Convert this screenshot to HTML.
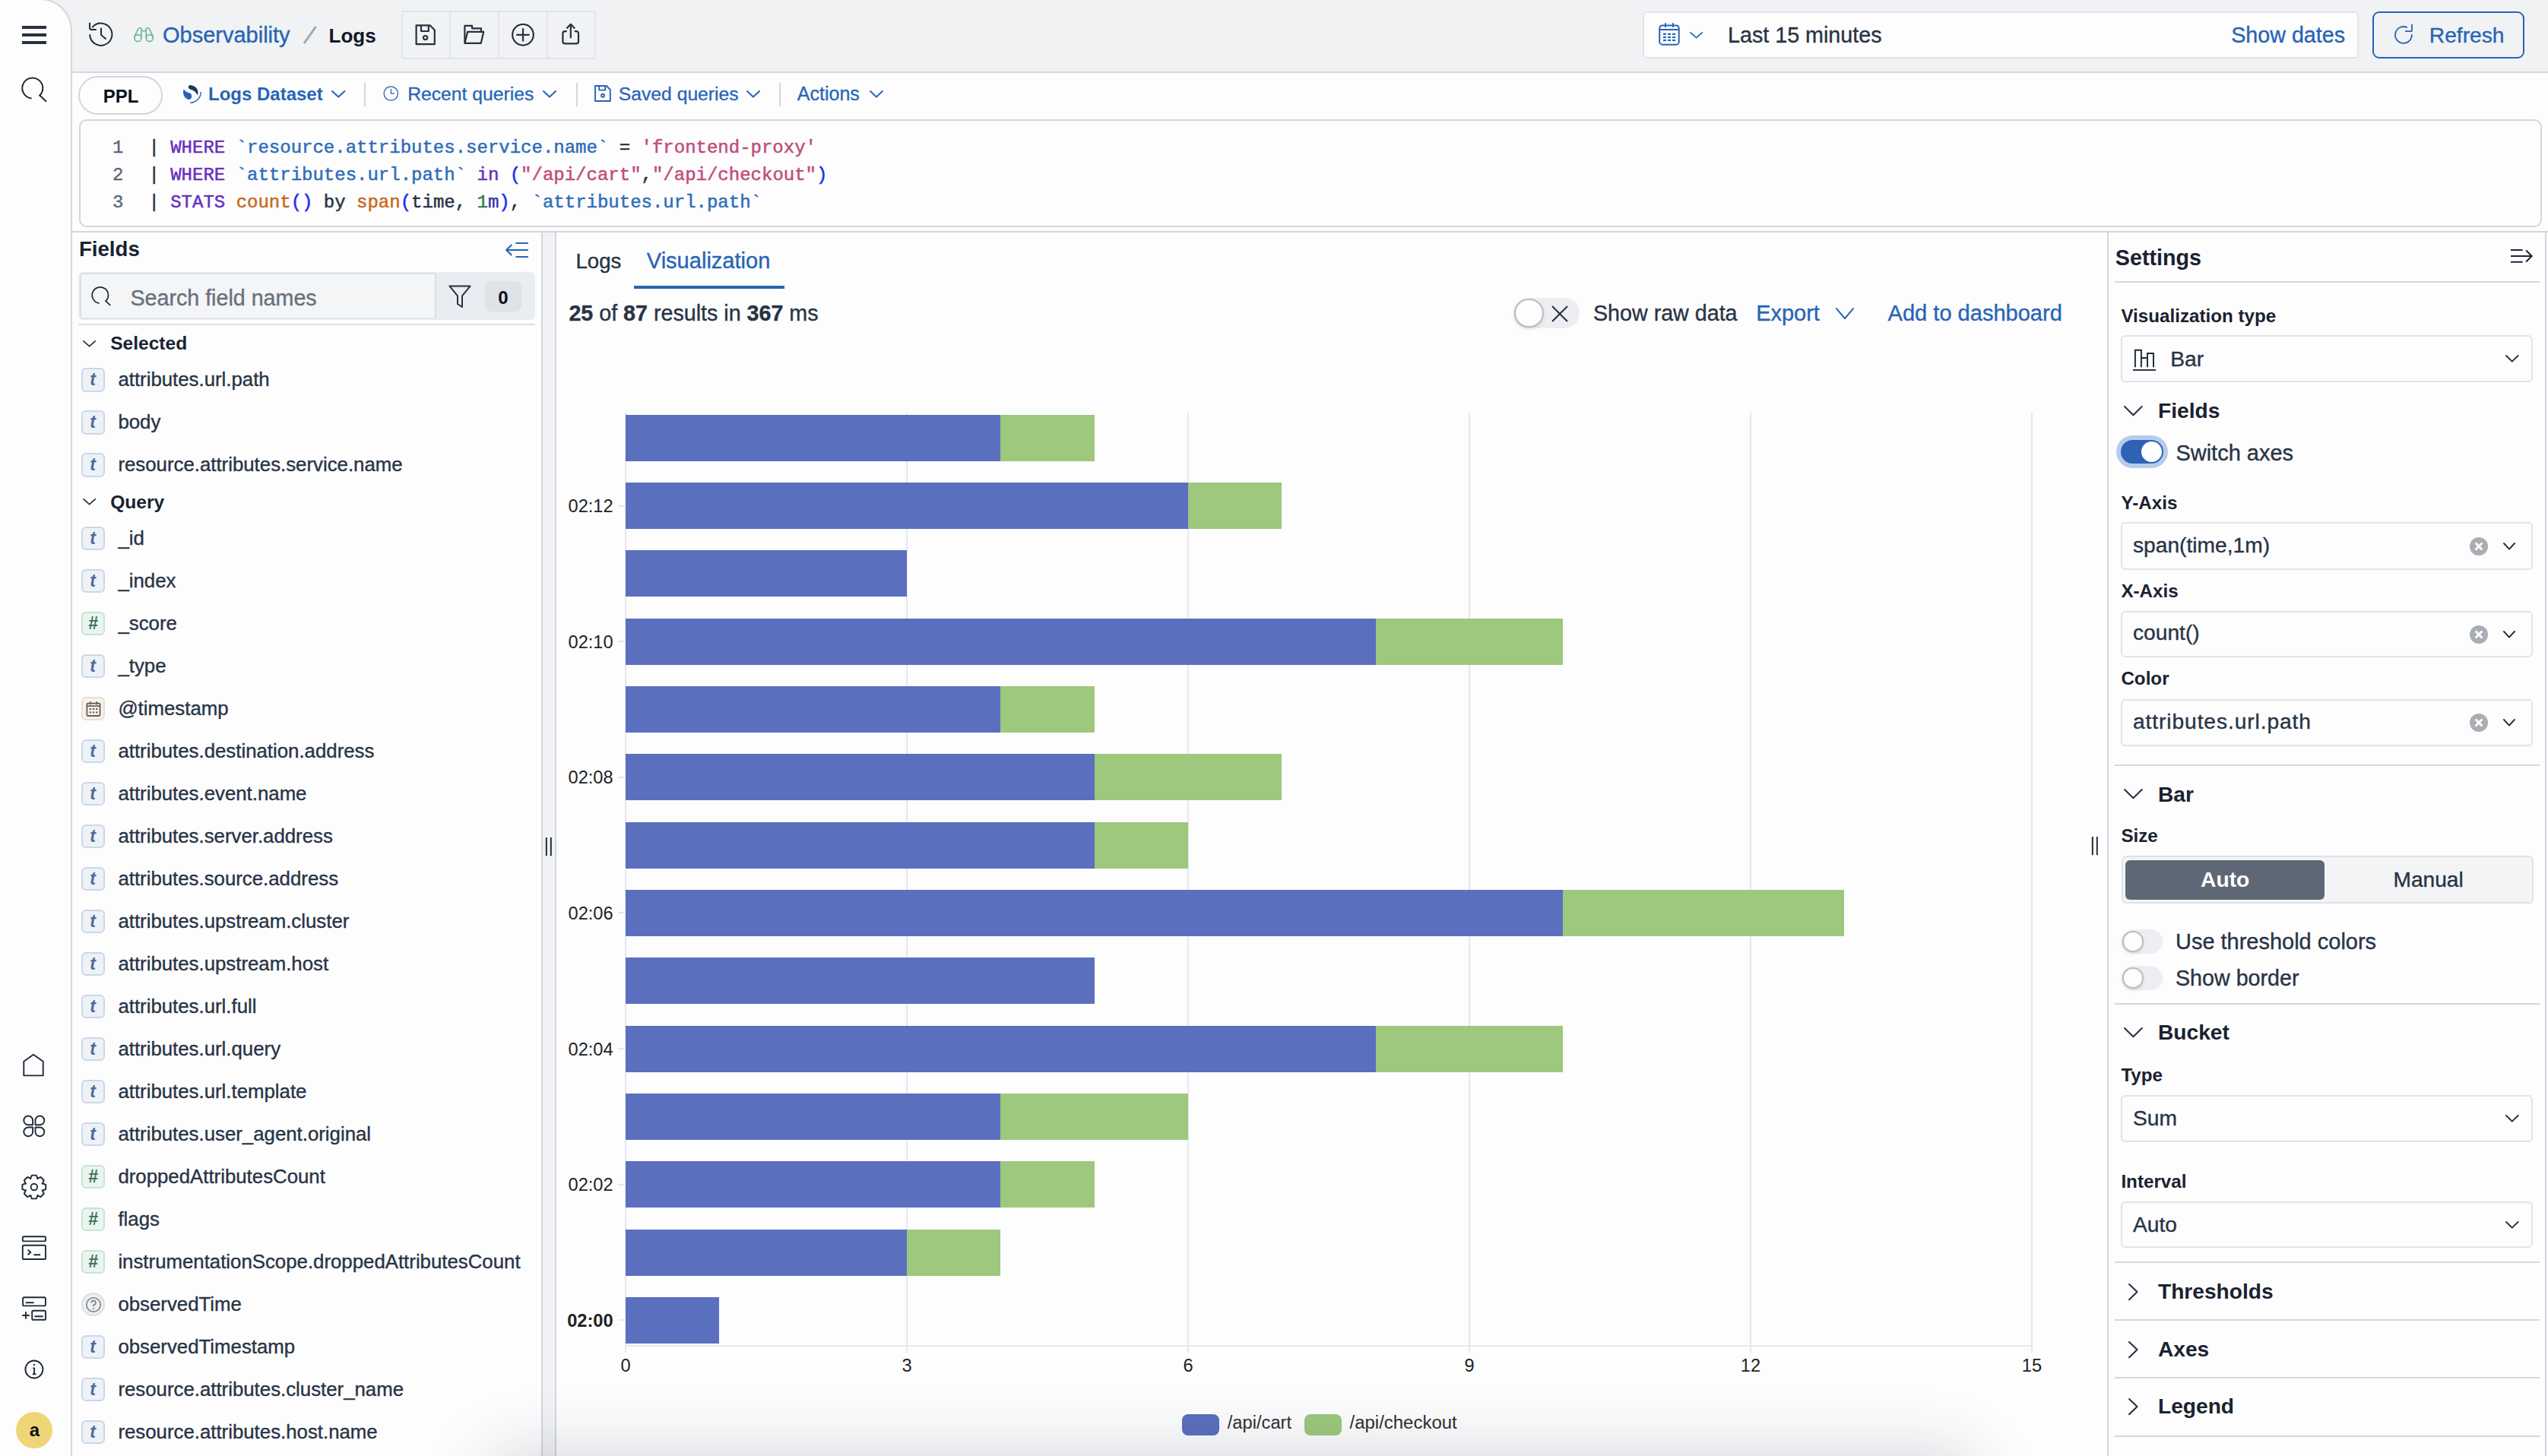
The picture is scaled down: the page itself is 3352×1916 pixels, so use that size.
<!DOCTYPE html><html><head><meta charset="utf-8"><title>Logs</title><style>
html,body{margin:0;padding:0;background:#fff;overflow:hidden}
#root{position:relative;width:1676px;height:958px;zoom:2;overflow:hidden;background:#fdfdfe;font-family:"Liberation Sans", sans-serif}
@media (max-width:2400px){#root{zoom:1}}
.b{position:absolute;box-sizing:border-box;display:block}
.t{position:absolute;white-space:nowrap;font-family:"Liberation Sans", sans-serif}
.t.m{font-family:"Liberation Mono", monospace}
</style></head><body><div id="root">
<div class="b" style="left:0.00px;top:0.00px;width:1676.00px;height:48.00px;background:#f1f2f4;border-bottom:1px solid #d3d6dc"></div>
<div class="b" style="left:0.00px;top:-1.00px;width:47.50px;height:960.00px;background:#fdfdfe;border-right:1px solid #d3d6dc;border-top:1px solid #d3d6dc;border-top-right-radius:21px"></div>
<div class="b" style="left:14.50px;top:17.00px;width:16.00px;height:1.85px;background:#28313f"></div>
<div class="b" style="left:14.50px;top:22.05px;width:16.00px;height:1.85px;background:#28313f"></div>
<div class="b" style="left:14.50px;top:27.10px;width:16.00px;height:1.85px;background:#28313f"></div>
<svg class="b" style="left:12.00px;top:48.00px;" width="22.00" height="22.00" viewBox="12.00 48.00 22.00 22.00" fill="none"><g stroke="#1f2a38" stroke-width="1.0" fill="none"><path d="M20.8 64.72 A6.75 6.75 0 1 1 25.74 63.17"/><path d="M25.9 62.5 L30.5 66.9"/></g></svg>
<svg class="b" style="left:54.00px;top:12.00px;" width="24.00" height="22.00" viewBox="54.00 12.00 24.00 22.00" fill="none"><g stroke="#1f2a38" stroke-width="1.0" fill="none" stroke-linecap="round"><path d="M60.9 17.8 A7.3 7.3 0 1 1 59.1 22.95"/><path d="M59.0 15.3 V18.3 Q59.0 19.5 60.2 19.5 H63.0"/><path d="M66.5 18.7 V22.95 L69.5 25.5"/></g></svg>
<svg class="b" style="left:86.00px;top:16.00px;" width="17.00" height="12.00" viewBox="86.00 16.00 17.00 12.00" fill="none"><g stroke="#6db59b" stroke-width="0.8" fill="none" stroke-linejoin="round"><circle cx="90.7" cy="25.05" r="2.25"/><circle cx="98.4" cy="25.05" r="2.25"/><path d="M88.25 24.4 L90.9 19.0 Q91.9 17.8 93.0 18.8 V25.3"/><path d="M100.85 24.4 L98.2 19.0 Q97.2 17.8 96.1 18.8 V25.3"/><path d="M93.0 20.3 H96.1"/></g></svg>
<div class="t" style="left:107.00px;top:16.04px;font-size:14.50px;line-height:14.50px;font-weight:400;color:#2864b4;-webkit-text-stroke:0.18px currentColor;">Observability</div>
<svg class="b" style="left:198.00px;top:16.00px;" width="12.00" height="14.00" viewBox="0 0 12 14" fill="none"><path d="M9.8 1.5 L2 12.6" stroke="#a3a8b1" stroke-width="1.5"/></svg>
<div class="t" style="left:216.30px;top:17.04px;font-size:13.00px;line-height:13.00px;font-weight:700;color:#111827;">Logs</div>
<div class="b" style="left:264.00px;top:7.00px;width:128.00px;height:32.00px;border:1px solid #e1e4e9;border-radius:1px"></div>
<div class="b" style="left:295.50px;top:7.00px;width:1.00px;height:32.00px;background:#e1e4e9"></div>
<div class="b" style="left:327.60px;top:7.00px;width:1.00px;height:32.00px;background:#e1e4e9"></div>
<div class="b" style="left:359.50px;top:7.00px;width:1.00px;height:32.00px;background:#e1e4e9"></div>
<svg class="b" style="left:272.50px;top:15.50px;" width="15.00" height="15.00" viewBox="0 0 15 15" fill="none"><g stroke="#28313f" stroke-width="1.1" fill="none" stroke-linejoin="round"><path d="M1.3 1.2 H10.4 L13.4 4.3 V13.6 H1.3 Z"/><path d="M4.5 1.2 V5 H9.4 V1.2"/><circle cx="7.3" cy="9.3" r="1.3"/></g></svg>
<svg class="b" style="left:304.50px;top:15.50px;" width="15.00" height="15.00" viewBox="0 0 15 15" fill="none"><g stroke="#28313f" stroke-width="1.1" fill="none" stroke-linejoin="round"><path d="M1.2 12.9 V1.4 H6 V3.2 H12 V5.1"/><path d="M1.2 12.9 L3.1 5.4 H13.6 L11.9 12.9 Z"/></g></svg>
<svg class="b" style="left:336.50px;top:15.50px;" width="15.00" height="15.00" viewBox="0 0 15 15" fill="none"><g stroke="#28313f" stroke-width="1.1" fill="none"><circle cx="7.5" cy="7.4" r="6.9"/><path d="M7.5 3.1 V11.8 M3.1 7.4 H11.8"/></g></svg>
<svg class="b" style="left:368.50px;top:14.50px;" width="15.00" height="16.00" viewBox="0 0 15 16" fill="none"><g stroke="#28313f" stroke-width="1.1" fill="none" stroke-linejoin="round"><path d="M4.4 6.1 H3.2 Q1.7 6.1 1.7 7.6 V12.8 Q1.7 14.2 3.2 14.2 H10.6 Q12 14.2 12 12.8 V7.6 Q12 6.1 10.6 6.1 H9.4"/><path d="M6.9 10.6 V1.4 M4.2 4.2 L6.9 1.4 L9.6 4.2"/></g></svg>
<div class="b" style="left:1080.50px;top:7.50px;width:471.00px;height:31.00px;background:#fdfdfe;border:1px solid #e2e4eb;border-radius:3px"></div>
<svg class="b" style="left:1088.00px;top:13.00px;" width="20.00" height="20.00" viewBox="1088.00 13.00 20.00 20.00" fill="none"><g stroke="#2864b4" stroke-width="1" fill="none"><rect x="1091.6" y="16.7" width="12.75" height="12.65" rx="1.9"/><path d="M1095.5 15.1 V18.0 M1100.5 15.1 V18.0 M1091.6 19.55 H1104.35"/></g><g fill="#2864b4"><rect x="1094.0" y="21.9" width="2" height="1.1"/><rect x="1097.0" y="21.9" width="2" height="1.1"/><rect x="1100.0" y="21.9" width="2" height="1.1"/><rect x="1094.0" y="23.95" width="2" height="1.1"/><rect x="1097.0" y="23.95" width="2" height="1.1"/><rect x="1100.0" y="23.95" width="2" height="1.1"/><rect x="1094.0" y="25.95" width="2" height="1.1"/><rect x="1097.0" y="25.95" width="2" height="1.1"/><rect x="1100.0" y="25.95" width="2" height="1.1"/></g></svg>
<svg class="b" style="left:1109.65px;top:18.75px;" width="12.60" height="8.25" viewBox="1109.65 18.75 12.60 8.25" fill="none"><path d="M1112.10 21.20 L1115.95 24.55 L1119.80 21.20" stroke="#2864b4" stroke-width="0.9" stroke-linecap="round" stroke-linejoin="round"/></svg>
<div class="t" style="left:1136.50px;top:16.24px;font-size:14.35px;line-height:14.35px;font-weight:400;color:#283444;-webkit-text-stroke:0.18px currentColor;">Last 15 minutes</div>
<div class="t" style="left:1467.60px;top:16.24px;font-size:14.35px;line-height:14.35px;font-weight:400;color:#2864b4;-webkit-text-stroke:0.18px currentColor;">Show dates</div>
<div class="b" style="left:1560.30px;top:7.35px;width:100.30px;height:31.10px;border:1px solid #2864b4;border-radius:4.5px"></div>
<svg class="b" style="left:1572.00px;top:13.00px;" width="18.00" height="18.00" viewBox="1572.00 13.00 18.00 18.00" fill="none"><g stroke="#2864b4" stroke-width="0.9" fill="none"><path d="M1583.4 18.1 A5.45 5.45 0 1 0 1586.4 22.6"/><path d="M1586.5 15.9 V19.7 Q1586.5 20.55 1585.65 20.55 H1582.0"/></g></svg>
<div class="t" style="left:1597.90px;top:16.24px;font-size:14.10px;line-height:14.10px;font-weight:400;color:#2864b4;-webkit-text-stroke:0.18px currentColor;">Refresh</div>
<div class="b" style="left:51.70px;top:50.10px;width:55.50px;height:25.50px;border:1px solid #d3d6dc;border-radius:13px;background:#fdfdfe"></div>
<div class="t" style="left:67.90px;top:57.34px;font-size:12.00px;line-height:12.00px;font-weight:700;color:#0b0f17;">PPL</div>
<svg class="b" style="left:119.00px;top:54.00px;" width="15.00" height="15.00" viewBox="119.00 54.00 15.00 15.00" fill="none"><path d="M124.0 57.6 C123.6 56.4 124.8 55.9 125.9 56.1 C128.6 56.6 130.5 58.8 130.2 61.2 C130.1 62.0 129.9 62.5 129.8 62.7 C129.0 60.6 127.6 59.6 125.8 59.0 C124.8 58.7 124.2 58.3 124.0 57.6 Z" fill="#163b5f"/><path d="M121.0 58.8 C121.6 60.0 122.6 60.5 124.2 61.0 C125.6 61.5 126.3 62.3 126.1 63.6 C125.9 65.1 124.7 65.8 123.6 65.4 C121.5 64.6 120.4 62.3 120.5 60.5 C120.5 59.8 120.7 59.2 121.0 58.8 Z" fill="#2860b7"/><path d="M132.15 60.5 A7.1 7.1 0 0 1 125.05 67.55" stroke="#2860b7" stroke-width="0.7"/></svg>
<div class="t" style="left:137.00px;top:56.14px;font-size:12.00px;line-height:12.00px;font-weight:700;color:#2864b4;">Logs Dataset</div>
<svg class="b" style="left:215.80px;top:57.60px;" width="13.20" height="8.80" viewBox="215.80 57.60 13.20 8.80" fill="none"><path d="M218.30 60.10 L222.40 63.90 L226.50 60.10" stroke="#2864b4" stroke-width="1.0" stroke-linecap="round" stroke-linejoin="round"/></svg>
<div class="b" style="left:239.50px;top:54.30px;width:1.00px;height:15.50px;background:#d3d6dc"></div>
<svg class="b" style="left:250.00px;top:55.00px;" width="14.00" height="14.00" viewBox="250.00 55.00 14.00 14.00" fill="none"><circle cx="257.15" cy="61.5" r="4.6" stroke="#2864b4" stroke-width="0.65"/><path d="M257.2 58.5 V61.6 H259.5" stroke="#2864b4" stroke-width="0.65"/></svg>
<div class="t" style="left:268.10px;top:56.14px;font-size:12.35px;line-height:12.35px;font-weight:400;color:#2864b4;-webkit-text-stroke:0.15px #2864b4">Recent queries</div>
<svg class="b" style="left:355.00px;top:57.60px;" width="13.00" height="8.80" viewBox="355.00 57.60 13.00 8.80" fill="none"><path d="M357.50 60.10 L361.50 63.90 L365.50 60.10" stroke="#2864b4" stroke-width="1.0" stroke-linecap="round" stroke-linejoin="round"/></svg>
<div class="b" style="left:378.80px;top:54.30px;width:1.00px;height:15.50px;background:#d3d6dc"></div>
<svg class="b" style="left:390.50px;top:55.50px;" width="12.00" height="12.00" viewBox="0 0 12 12" fill="none"><g stroke="#2864b4" stroke-width="0.95" fill="none" stroke-linejoin="round"><path d="M1 1 H8.4 L10.9 3.5 V11 H1 Z"/><path d="M3.6 1 V3.8 H7.6 V1"/><circle cx="6" cy="7.4" r="1"/></g></svg>
<div class="t" style="left:406.90px;top:56.14px;font-size:12.35px;line-height:12.35px;font-weight:400;color:#2864b4;-webkit-text-stroke:0.15px #2864b4">Saved queries</div>
<svg class="b" style="left:489.00px;top:57.60px;" width="13.00" height="8.80" viewBox="489.00 57.60 13.00 8.80" fill="none"><path d="M491.50 60.10 L495.50 63.90 L499.50 60.10" stroke="#2864b4" stroke-width="1.0" stroke-linecap="round" stroke-linejoin="round"/></svg>
<div class="b" style="left:512.30px;top:54.30px;width:1.00px;height:15.50px;background:#d3d6dc"></div>
<div class="t" style="left:524.40px;top:55.64px;font-size:12.50px;line-height:12.50px;font-weight:400;color:#2864b4;-webkit-text-stroke:0.15px #2864b4">Actions</div>
<svg class="b" style="left:570.20px;top:57.60px;" width="12.90" height="8.80" viewBox="570.20 57.60 12.90 8.80" fill="none"><path d="M572.70 60.10 L576.65 63.90 L580.60 60.10" stroke="#2864b4" stroke-width="1.0" stroke-linecap="round" stroke-linejoin="round"/></svg>
<div class="b" style="left:52.00px;top:78.50px;width:1620.00px;height:71.00px;border:1px solid #d3d6dc;border-radius:5px;background:#fdfdfe"></div>
<div class="t m" style="right:1594.80px;top:91.59px;font-size:12.00px;line-height:12.00px;font-weight:400;color:#5b6678;-webkit-text-stroke:0.18px currentColor;">1</div>
<div class="t m" style="left:97.70px;top:91.59px;font-size:12.00px;line-height:12.00px;font-weight:400;color:#283444;-webkit-text-stroke:0.25px currentColor"><span style="color:#283444">|&nbsp;</span><span style="color:#6a2fbf">WHERE</span><span style="color:#283444">&nbsp;</span><span style="color:#2f6db8">`resource.attributes.service.name`</span><span style="color:#283444">&nbsp;=&nbsp;</span><span style="color:#c24b7c">'frontend-proxy'</span></div>
<div class="t m" style="right:1594.80px;top:109.54px;font-size:12.00px;line-height:12.00px;font-weight:400;color:#5b6678;-webkit-text-stroke:0.18px currentColor;">2</div>
<div class="t m" style="left:97.70px;top:109.54px;font-size:12.00px;line-height:12.00px;font-weight:400;color:#283444;-webkit-text-stroke:0.25px currentColor"><span style="color:#283444">|&nbsp;</span><span style="color:#6a2fbf">WHERE</span><span style="color:#283444">&nbsp;</span><span style="color:#2f6db8">`attributes.url.path`</span><span style="color:#283444">&nbsp;</span><span style="color:#6a2fbf">in</span><span style="color:#283444">&nbsp;</span><span style="color:#1a2cf0">(</span><span style="color:#c24b7c">"/api/cart"</span><span style="color:#283444">,</span><span style="color:#c24b7c">"/api/checkout"</span><span style="color:#1a2cf0">)</span></div>
<div class="t m" style="right:1594.80px;top:127.54px;font-size:12.00px;line-height:12.00px;font-weight:400;color:#5b6678;-webkit-text-stroke:0.18px currentColor;">3</div>
<div class="t m" style="left:97.70px;top:127.54px;font-size:12.00px;line-height:12.00px;font-weight:400;color:#283444;-webkit-text-stroke:0.25px currentColor"><span style="color:#283444">|&nbsp;</span><span style="color:#6a2fbf">STATS</span><span style="color:#283444">&nbsp;</span><span style="color:#c56a20">count</span><span style="color:#1a2cf0">()</span><span style="color:#283444">&nbsp;by&nbsp;</span><span style="color:#c56a20">span</span><span style="color:#1a2cf0">(</span><span style="color:#283444">time,&nbsp;</span><span style="color:#2f7d52">1</span><span style="color:#3b34a8">m</span><span style="color:#1a2cf0">)</span><span style="color:#283444">,&nbsp;</span><span style="color:#2f6db8">`attributes.url.path`</span></div>
<div class="b" style="left:47.00px;top:152.00px;width:1629.00px;height:1.00px;background:#d3d6dc"></div>
<div class="b" style="left:356.00px;top:152.50px;width:1.00px;height:806.00px;background:#d3d6dc"></div>
<div class="b" style="left:357.00px;top:153.00px;width:8.50px;height:805.00px;background:#f1f2f4"></div>
<div class="b" style="left:365.20px;top:152.50px;width:1.00px;height:806.00px;background:#d3d6dc"></div>
<div class="b" style="left:1386.00px;top:152.50px;width:1.00px;height:806.00px;background:#d3d6dc"></div>
<div class="b" style="left:1674.20px;top:152.50px;width:1.00px;height:806.00px;background:#d3d6dc"></div>
<svg class="b" style="left:358.00px;top:550.50px;" width="6.00" height="13.00" viewBox="0 0 6 13" fill="none"><path d="M1.4 0.5 V12.6 M4.4 0.5 V12.6" stroke="#182536" stroke-width="0.95"/></svg>
<svg class="b" style="left:1375.00px;top:550.00px;" width="6.00" height="13.00" viewBox="0 0 6 13" fill="none"><path d="M1.4 0.5 V12.6 M4.4 0.5 V12.6" stroke="#182536" stroke-width="0.95"/></svg>
<div class="t" style="left:52.00px;top:157.04px;font-size:13.80px;line-height:13.80px;font-weight:700;color:#1a2230;">Fields</div>
<svg class="b" style="left:331.00px;top:158.00px;" width="18.00" height="13.00" viewBox="0 0 18 13" fill="none"><g stroke="#2864b4" stroke-width="1.05" fill="none" stroke-linecap="butt"><path d="M8.2 2 H16.4 M2.2 6.5 H16.4 M8.2 11 H16.4"/><path d="M5.6 3.0 L2.1 6.5 L5.6 10.0"/></g></svg>
<div class="b" style="left:51.50px;top:179.00px;width:300.50px;height:31.70px;background:#e9ecf1;border-radius:3px"></div>
<div class="b" style="left:52.30px;top:179.60px;width:234.70px;height:30.60px;background:#f4f5f7;border:1px solid #dcdfe5;border-bottom-color:#e3e6eb;border-radius:2px"></div>
<svg class="b" style="left:57.00px;top:186.00px;" width="18.00" height="18.00" viewBox="57.00 186.00 18.00 18.00" fill="none"><g stroke="#1f2a38" stroke-width="0.85" fill="none"><path d="M65.45 199.5 A5.3 5.3 0 1 1 69.3 198.3"/><path d="M69.3 197.8 L72.6 200.9"/></g></svg>
<div class="t" style="left:85.70px;top:189.04px;font-size:14.33px;line-height:14.33px;font-weight:400;color:#69707d;-webkit-text-stroke:0.18px currentColor;">Search field names</div>
<svg class="b" style="left:294.00px;top:186.50px;" width="17.00" height="17.00" viewBox="0 0 17 17" fill="none"><path d="M1.7 1.7 H15.3 L10 8.2 V15.5 L7 13.5 V8.2 Z" stroke="#28313f" stroke-width="1" stroke-linejoin="round" fill="none"/></svg>
<div class="b" style="left:318.80px;top:184.90px;width:24.20px;height:20.00px;background:#dfe2e7;border-radius:4px"></div>
<div class="t" style="left:331.00px;transform:translateX(-50%);top:190.14px;font-size:12.00px;line-height:12.00px;font-weight:700;color:#0b0f17;">0</div>
<div class="b" style="left:51.50px;top:213.00px;width:300.50px;height:1.00px;background:#dcdfe4"></div>
<svg class="b" style="left:52.25px;top:222.00px;" width="12.60" height="8.30" viewBox="52.25 222.00 12.60 8.30" fill="none"><path d="M54.70 224.45 L58.55 227.85 L62.40 224.45" stroke="#283444" stroke-width="0.9" stroke-linecap="round" stroke-linejoin="round"/></svg>
<div class="t" style="left:72.60px;top:220.14px;font-size:12.28px;line-height:12.28px;font-weight:700;color:#1a2230;">Selected</div>
<div class="b" style="left:53.60px;top:242.20px;width:15.60px;height:15.60px;background:#edf2f8;border:1px solid #cbd7e6;border-radius:3px"></div>
<div class="t" style="left:61.00px;transform:translateX(-50%);top:243.94px;font-size:11.50px;line-height:11.50px;font-weight:700;color:#4d6c96;font-style:italic">t</div>
<div class="t" style="left:77.70px;top:243.69px;font-size:12.90px;line-height:12.90px;font-weight:400;color:#283444;-webkit-text-stroke:0.18px currentColor;">attributes.url.path</div>
<div class="b" style="left:53.60px;top:270.20px;width:15.60px;height:15.60px;background:#edf2f8;border:1px solid #cbd7e6;border-radius:3px"></div>
<div class="t" style="left:61.00px;transform:translateX(-50%);top:271.94px;font-size:11.50px;line-height:11.50px;font-weight:700;color:#4d6c96;font-style:italic">t</div>
<div class="t" style="left:77.70px;top:271.69px;font-size:12.90px;line-height:12.90px;font-weight:400;color:#283444;-webkit-text-stroke:0.18px currentColor;">body</div>
<div class="b" style="left:53.60px;top:298.20px;width:15.60px;height:15.60px;background:#edf2f8;border:1px solid #cbd7e6;border-radius:3px"></div>
<div class="t" style="left:61.00px;transform:translateX(-50%);top:299.94px;font-size:11.50px;line-height:11.50px;font-weight:700;color:#4d6c96;font-style:italic">t</div>
<div class="t" style="left:77.70px;top:299.69px;font-size:12.90px;line-height:12.90px;font-weight:400;color:#283444;-webkit-text-stroke:0.18px currentColor;">resource.attributes.service.name</div>
<svg class="b" style="left:52.25px;top:326.20px;" width="12.60" height="8.30" viewBox="52.25 326.20 12.60 8.30" fill="none"><path d="M54.70 328.65 L58.55 332.05 L62.40 328.65" stroke="#283444" stroke-width="0.9" stroke-linecap="round" stroke-linejoin="round"/></svg>
<div class="t" style="left:72.60px;top:324.39px;font-size:12.28px;line-height:12.28px;font-weight:700;color:#1a2230;">Query</div>
<div class="b" style="left:53.60px;top:346.55px;width:15.60px;height:15.60px;background:#edf2f8;border:1px solid #cbd7e6;border-radius:3px"></div>
<div class="t" style="left:61.00px;transform:translateX(-50%);top:348.29px;font-size:11.50px;line-height:11.50px;font-weight:700;color:#4d6c96;font-style:italic">t</div>
<div class="t" style="left:77.70px;top:348.04px;font-size:12.90px;line-height:12.90px;font-weight:400;color:#283444;-webkit-text-stroke:0.18px currentColor;">_id</div>
<div class="b" style="left:53.60px;top:374.55px;width:15.60px;height:15.60px;background:#edf2f8;border:1px solid #cbd7e6;border-radius:3px"></div>
<div class="t" style="left:61.00px;transform:translateX(-50%);top:376.29px;font-size:11.50px;line-height:11.50px;font-weight:700;color:#4d6c96;font-style:italic">t</div>
<div class="t" style="left:77.70px;top:376.04px;font-size:12.90px;line-height:12.90px;font-weight:400;color:#283444;-webkit-text-stroke:0.18px currentColor;">_index</div>
<div class="b" style="left:53.60px;top:402.55px;width:15.60px;height:15.60px;background:#eaf5f0;border:1px solid #c7e3d5;border-radius:3px"></div>
<div class="t" style="left:61.20px;transform:translateX(-50%);top:404.59px;font-size:11.50px;line-height:11.50px;font-weight:700;color:#3c6f57;font-style:italic">#</div>
<div class="t" style="left:77.70px;top:404.04px;font-size:12.90px;line-height:12.90px;font-weight:400;color:#283444;-webkit-text-stroke:0.18px currentColor;">_score</div>
<div class="b" style="left:53.60px;top:430.55px;width:15.60px;height:15.60px;background:#edf2f8;border:1px solid #cbd7e6;border-radius:3px"></div>
<div class="t" style="left:61.00px;transform:translateX(-50%);top:432.29px;font-size:11.50px;line-height:11.50px;font-weight:700;color:#4d6c96;font-style:italic">t</div>
<div class="t" style="left:77.70px;top:432.04px;font-size:12.90px;line-height:12.90px;font-weight:400;color:#283444;-webkit-text-stroke:0.18px currentColor;">_type</div>
<div class="b" style="left:53.60px;top:458.55px;width:15.60px;height:15.60px;background:#f5f1ec;border:1px solid #e6dfd6;border-radius:3px"></div>
<svg class="b" style="left:56.10px;top:461.05px;" width="11.00" height="11.00" viewBox="0 0 11 11" fill="none"><g stroke="#6b5d4f" stroke-width="0.9" fill="none"><rect x="1.2" y="1.8" width="8.6" height="8.2" rx="0.6"/><path d="M3.4 0.6 V2.6 M7.6 0.6 V2.6 M1.2 3.6 H9.8"/></g><g fill="#6b5d4f"><rect x="2.8" y="5" width="1.2" height="1"/><rect x="4.9" y="5" width="1.2" height="1"/><rect x="7" y="5" width="1.2" height="1"/><rect x="2.8" y="7.2" width="1.2" height="1"/><rect x="4.9" y="7.2" width="1.2" height="1"/><rect x="7" y="7.2" width="1.2" height="1"/></g></svg>
<div class="t" style="left:77.70px;top:460.04px;font-size:12.90px;line-height:12.90px;font-weight:400;color:#283444;-webkit-text-stroke:0.18px currentColor;">@timestamp</div>
<div class="b" style="left:53.60px;top:486.55px;width:15.60px;height:15.60px;background:#edf2f8;border:1px solid #cbd7e6;border-radius:3px"></div>
<div class="t" style="left:61.00px;transform:translateX(-50%);top:488.29px;font-size:11.50px;line-height:11.50px;font-weight:700;color:#4d6c96;font-style:italic">t</div>
<div class="t" style="left:77.70px;top:488.04px;font-size:12.90px;line-height:12.90px;font-weight:400;color:#283444;-webkit-text-stroke:0.18px currentColor;">attributes.destination.address</div>
<div class="b" style="left:53.60px;top:514.55px;width:15.60px;height:15.60px;background:#edf2f8;border:1px solid #cbd7e6;border-radius:3px"></div>
<div class="t" style="left:61.00px;transform:translateX(-50%);top:516.29px;font-size:11.50px;line-height:11.50px;font-weight:700;color:#4d6c96;font-style:italic">t</div>
<div class="t" style="left:77.70px;top:516.04px;font-size:12.90px;line-height:12.90px;font-weight:400;color:#283444;-webkit-text-stroke:0.18px currentColor;">attributes.event.name</div>
<div class="b" style="left:53.60px;top:542.55px;width:15.60px;height:15.60px;background:#edf2f8;border:1px solid #cbd7e6;border-radius:3px"></div>
<div class="t" style="left:61.00px;transform:translateX(-50%);top:544.29px;font-size:11.50px;line-height:11.50px;font-weight:700;color:#4d6c96;font-style:italic">t</div>
<div class="t" style="left:77.70px;top:544.04px;font-size:12.90px;line-height:12.90px;font-weight:400;color:#283444;-webkit-text-stroke:0.18px currentColor;">attributes.server.address</div>
<div class="b" style="left:53.60px;top:570.55px;width:15.60px;height:15.60px;background:#edf2f8;border:1px solid #cbd7e6;border-radius:3px"></div>
<div class="t" style="left:61.00px;transform:translateX(-50%);top:572.29px;font-size:11.50px;line-height:11.50px;font-weight:700;color:#4d6c96;font-style:italic">t</div>
<div class="t" style="left:77.70px;top:572.04px;font-size:12.90px;line-height:12.90px;font-weight:400;color:#283444;-webkit-text-stroke:0.18px currentColor;">attributes.source.address</div>
<div class="b" style="left:53.60px;top:598.55px;width:15.60px;height:15.60px;background:#edf2f8;border:1px solid #cbd7e6;border-radius:3px"></div>
<div class="t" style="left:61.00px;transform:translateX(-50%);top:600.29px;font-size:11.50px;line-height:11.50px;font-weight:700;color:#4d6c96;font-style:italic">t</div>
<div class="t" style="left:77.70px;top:600.04px;font-size:12.90px;line-height:12.90px;font-weight:400;color:#283444;-webkit-text-stroke:0.18px currentColor;">attributes.upstream.cluster</div>
<div class="b" style="left:53.60px;top:626.55px;width:15.60px;height:15.60px;background:#edf2f8;border:1px solid #cbd7e6;border-radius:3px"></div>
<div class="t" style="left:61.00px;transform:translateX(-50%);top:628.29px;font-size:11.50px;line-height:11.50px;font-weight:700;color:#4d6c96;font-style:italic">t</div>
<div class="t" style="left:77.70px;top:628.04px;font-size:12.90px;line-height:12.90px;font-weight:400;color:#283444;-webkit-text-stroke:0.18px currentColor;">attributes.upstream.host</div>
<div class="b" style="left:53.60px;top:654.55px;width:15.60px;height:15.60px;background:#edf2f8;border:1px solid #cbd7e6;border-radius:3px"></div>
<div class="t" style="left:61.00px;transform:translateX(-50%);top:656.29px;font-size:11.50px;line-height:11.50px;font-weight:700;color:#4d6c96;font-style:italic">t</div>
<div class="t" style="left:77.70px;top:656.04px;font-size:12.90px;line-height:12.90px;font-weight:400;color:#283444;-webkit-text-stroke:0.18px currentColor;">attributes.url.full</div>
<div class="b" style="left:53.60px;top:682.55px;width:15.60px;height:15.60px;background:#edf2f8;border:1px solid #cbd7e6;border-radius:3px"></div>
<div class="t" style="left:61.00px;transform:translateX(-50%);top:684.29px;font-size:11.50px;line-height:11.50px;font-weight:700;color:#4d6c96;font-style:italic">t</div>
<div class="t" style="left:77.70px;top:684.04px;font-size:12.90px;line-height:12.90px;font-weight:400;color:#283444;-webkit-text-stroke:0.18px currentColor;">attributes.url.query</div>
<div class="b" style="left:53.60px;top:710.55px;width:15.60px;height:15.60px;background:#edf2f8;border:1px solid #cbd7e6;border-radius:3px"></div>
<div class="t" style="left:61.00px;transform:translateX(-50%);top:712.29px;font-size:11.50px;line-height:11.50px;font-weight:700;color:#4d6c96;font-style:italic">t</div>
<div class="t" style="left:77.70px;top:712.04px;font-size:12.90px;line-height:12.90px;font-weight:400;color:#283444;-webkit-text-stroke:0.18px currentColor;">attributes.url.template</div>
<div class="b" style="left:53.60px;top:738.55px;width:15.60px;height:15.60px;background:#edf2f8;border:1px solid #cbd7e6;border-radius:3px"></div>
<div class="t" style="left:61.00px;transform:translateX(-50%);top:740.29px;font-size:11.50px;line-height:11.50px;font-weight:700;color:#4d6c96;font-style:italic">t</div>
<div class="t" style="left:77.70px;top:740.04px;font-size:12.90px;line-height:12.90px;font-weight:400;color:#283444;-webkit-text-stroke:0.18px currentColor;">attributes.user_agent.original</div>
<div class="b" style="left:53.60px;top:766.55px;width:15.60px;height:15.60px;background:#eaf5f0;border:1px solid #c7e3d5;border-radius:3px"></div>
<div class="t" style="left:61.20px;transform:translateX(-50%);top:768.59px;font-size:11.50px;line-height:11.50px;font-weight:700;color:#3c6f57;font-style:italic">#</div>
<div class="t" style="left:77.70px;top:768.04px;font-size:12.90px;line-height:12.90px;font-weight:400;color:#283444;-webkit-text-stroke:0.18px currentColor;">droppedAttributesCount</div>
<div class="b" style="left:53.60px;top:794.55px;width:15.60px;height:15.60px;background:#eaf5f0;border:1px solid #c7e3d5;border-radius:3px"></div>
<div class="t" style="left:61.20px;transform:translateX(-50%);top:796.59px;font-size:11.50px;line-height:11.50px;font-weight:700;color:#3c6f57;font-style:italic">#</div>
<div class="t" style="left:77.70px;top:796.04px;font-size:12.90px;line-height:12.90px;font-weight:400;color:#283444;-webkit-text-stroke:0.18px currentColor;">flags</div>
<div class="b" style="left:53.60px;top:822.55px;width:15.60px;height:15.60px;background:#eaf5f0;border:1px solid #c7e3d5;border-radius:3px"></div>
<div class="t" style="left:61.20px;transform:translateX(-50%);top:824.59px;font-size:11.50px;line-height:11.50px;font-weight:700;color:#3c6f57;font-style:italic">#</div>
<div class="t" style="left:77.70px;top:824.04px;font-size:12.90px;line-height:12.90px;font-weight:400;color:#283444;-webkit-text-stroke:0.18px currentColor;">instrumentationScope.droppedAttributesCount</div>
<div class="b" style="left:53.60px;top:850.55px;width:15.60px;height:15.60px;background:#eeeff1;border:1px solid #dcdee2;border-radius:50%"></div>
<svg class="b" style="left:55.90px;top:852.85px;" width="11.00" height="11.00" viewBox="0 0 11 11" fill="none"><circle cx="5.5" cy="5.5" r="4.6" stroke="#7a7f88" stroke-width="0.8"/><path d="M4 4.3 Q4 2.8 5.5 2.8 Q7 2.8 7 4.2 Q7 5.2 5.5 5.7 V6.6" stroke="#7a7f88" stroke-width="0.8" fill="none"/><circle cx="5.5" cy="8.1" r="0.5" fill="#7a7f88"/></svg>
<div class="t" style="left:77.70px;top:852.04px;font-size:12.90px;line-height:12.90px;font-weight:400;color:#283444;-webkit-text-stroke:0.18px currentColor;">observedTime</div>
<div class="b" style="left:53.60px;top:878.55px;width:15.60px;height:15.60px;background:#edf2f8;border:1px solid #cbd7e6;border-radius:3px"></div>
<div class="t" style="left:61.00px;transform:translateX(-50%);top:880.29px;font-size:11.50px;line-height:11.50px;font-weight:700;color:#4d6c96;font-style:italic">t</div>
<div class="t" style="left:77.70px;top:880.04px;font-size:12.90px;line-height:12.90px;font-weight:400;color:#283444;-webkit-text-stroke:0.18px currentColor;">observedTimestamp</div>
<div class="b" style="left:53.60px;top:906.55px;width:15.60px;height:15.60px;background:#edf2f8;border:1px solid #cbd7e6;border-radius:3px"></div>
<div class="t" style="left:61.00px;transform:translateX(-50%);top:908.29px;font-size:11.50px;line-height:11.50px;font-weight:700;color:#4d6c96;font-style:italic">t</div>
<div class="t" style="left:77.70px;top:908.04px;font-size:12.90px;line-height:12.90px;font-weight:400;color:#283444;-webkit-text-stroke:0.18px currentColor;">resource.attributes.cluster_name</div>
<div class="b" style="left:53.60px;top:934.55px;width:15.60px;height:15.60px;background:#edf2f8;border:1px solid #cbd7e6;border-radius:3px"></div>
<div class="t" style="left:61.00px;transform:translateX(-50%);top:936.29px;font-size:11.50px;line-height:11.50px;font-weight:700;color:#4d6c96;font-style:italic">t</div>
<div class="t" style="left:77.70px;top:936.04px;font-size:12.90px;line-height:12.90px;font-weight:400;color:#283444;-webkit-text-stroke:0.18px currentColor;">resource.attributes.host.name</div>
<svg class="b" style="left:10.00px;top:688.00px;" width="26.00" height="24.00" viewBox="10.00 688.00 26.00 24.00" fill="none"><path d="M15.65 707.7 V698.4 L22.0 693.9 L28.35 698.4 V707.7 Z" stroke="#1f2a38" stroke-width="0.95" stroke-linejoin="round" fill="none"/></svg>
<svg class="b" style="left:10.00px;top:729.00px;" width="26.00" height="24.00" viewBox="10.00 729.00 26.00 24.00" fill="none"><g stroke="#1f2a38" stroke-width="0.95" fill="none" stroke-linejoin="round"><path d="M21.55 740.15 H18.6 A2.95 2.95 0 1 1 21.55 737.2 Z"/><path d="M23.25 740.15 H26.2 A2.95 2.95 0 1 0 23.25 737.2 Z"/><path d="M21.55 741.75 H18.6 A2.95 2.95 0 1 0 21.55 744.7 Z"/><path d="M23.25 741.75 H26.2 A2.95 2.95 0 1 1 23.25 744.7 Z"/></g></svg>
<svg class="b" style="left:10.00px;top:769.00px;" width="26.00" height="24.00" viewBox="10.00 769.00 26.00 24.00" fill="none"><path d="M20.00 775.61 L20.90 773.29 L23.90 773.29 L24.80 775.61 L24.51 775.49 L26.79 774.49 L28.91 776.61 L27.91 778.89 L27.79 778.60 L30.11 779.50 L30.11 782.50 L27.79 783.40 L27.91 783.11 L28.91 785.39 L26.79 787.51 L24.51 786.51 L24.80 786.39 L23.90 788.71 L20.90 788.71 L20.00 786.39 L20.29 786.51 L18.01 787.51 L15.89 785.39 L16.89 783.11 L17.01 783.40 L14.69 782.50 L14.69 779.50 L17.01 778.60 L16.89 778.89 L15.89 776.61 L18.01 774.49 L20.29 775.49 Z" stroke="#1f2a38" stroke-width="0.95" stroke-linejoin="round" fill="none"/><circle cx="22.4" cy="781" r="2.1" stroke="#1f2a38" stroke-width="0.95"/></svg>
<svg class="b" style="left:10.00px;top:810.00px;" width="26.00" height="22.00" viewBox="10.00 810.00 26.00 22.00" fill="none"><g stroke="#1f2a38" stroke-width="0.95" fill="none"><rect x="14.9" y="813.6" width="15.1" height="3.1" rx="0.8"/><rect x="14.9" y="819.4" width="15.1" height="9.1" rx="0.8"/><path d="M18.3 822.4 L20.1 824.0 L18.3 825.6 M22.2 825.6 H26.6"/></g></svg>
<svg class="b" style="left:10.00px;top:850.00px;" width="26.00" height="22.00" viewBox="10.00 850.00 26.00 22.00" fill="none"><g stroke="#1f2a38" stroke-width="0.95" fill="none"><rect x="15.05" y="853.6" width="14.9" height="5.6" rx="0.8"/><path d="M16.9 857.1 H22.3"/><rect x="21.1" y="862.4" width="8.9" height="6.0" rx="0.8"/><path d="M22.7 866.1 H28.3 M14.6 865.5 H19.4 M17.0 863.1 V867.9"/></g></svg>
<svg class="b" style="left:12.00px;top:890.00px;" width="22.00" height="22.00" viewBox="12.00 890.00 22.00 22.00" fill="none"><circle cx="22.45" cy="901" r="5.75" stroke="#1f2a38" stroke-width="0.95"/><path d="M21.6 900.2 H22.55 V904.1 M21.4 904.1 H23.7" stroke="#1f2a38" stroke-width="0.95"/><circle cx="22.5" cy="897.95" r="0.6" fill="#1f2a38"/></svg>
<div class="b" style="left:10.50px;top:929.10px;width:24.00px;height:24.00px;background:#eed678;border-radius:50%"></div>
<div class="t" style="left:22.70px;transform:translateX(-50%);top:935.24px;font-size:12.00px;line-height:12.00px;font-weight:700;color:#101010;">a</div>
<div class="t" style="left:378.75px;top:165.14px;font-size:13.80px;line-height:13.80px;font-weight:400;color:#283444;-webkit-text-stroke:0.18px currentColor;">Logs</div>
<div class="t" style="left:425.40px;top:164.64px;font-size:14.53px;line-height:14.53px;font-weight:400;color:#2864b4;-webkit-text-stroke:0.18px currentColor;">Visualization</div>
<div class="b" style="left:416.90px;top:188.00px;width:99.10px;height:2.10px;background:#2864b4"></div>
<div class="t" style="left:374.20px;top:199.04px;font-size:14.33px;line-height:14.33px;font-weight:400;color:#283444;-webkit-text-stroke:0.18px currentColor;"><b>25</b> of <b>87</b> results in <b>367</b> ms</div>
<div class="b" style="left:995.60px;top:196.00px;width:43.40px;height:19.80px;background:#eceef1;border-radius:10px"></div>
<div class="b" style="left:995.90px;top:196.30px;width:19.40px;height:19.40px;background:#fdfdfe;border:1px solid #b9bcc2;border-radius:50%;box-shadow:0 1px 2px rgba(0,0,0,.10)"></div>
<svg class="b" style="left:1020.00px;top:200.50px;" width="12.00" height="12.00" viewBox="0 0 12 12" fill="none"><path d="M1 1 L11 11 M11 1 L1 11" stroke="#28313f" stroke-width="1.05"/></svg>
<div class="t" style="left:1048.00px;top:199.14px;font-size:14.33px;line-height:14.33px;font-weight:400;color:#283444;-webkit-text-stroke:0.18px currentColor;">Show raw data</div>
<div class="t" style="left:1155.10px;top:199.14px;font-size:14.48px;line-height:14.48px;font-weight:400;color:#2864b4;-webkit-text-stroke:0.18px currentColor;">Export</div>
<svg class="b" style="left:1205.40px;top:200.40px;" width="16.00" height="11.60" viewBox="1205.40 200.40 16.00 11.60" fill="none"><path d="M1207.93 202.93 L1213.40 209.47 L1218.88 202.93" stroke="#2864b4" stroke-width="1.05" stroke-linecap="round" stroke-linejoin="round"/></svg>
<div class="t" style="left:1241.80px;top:199.14px;font-size:14.52px;line-height:14.52px;font-weight:400;color:#2864b4;-webkit-text-stroke:0.18px currentColor;">Add to dashboard</div>
<div class="b" style="left:411.05px;top:271.70px;width:1.00px;height:618.30px;background:#e6e7f0"></div>
<div class="t" style="left:411.55px;transform:translateX(-50%);top:893.04px;font-size:11.80px;line-height:11.80px;font-weight:400;color:#222;">0</div>
<div class="b" style="left:596.03px;top:271.70px;width:1.00px;height:618.30px;background:#e6e7f0"></div>
<div class="t" style="left:596.53px;transform:translateX(-50%);top:893.04px;font-size:11.80px;line-height:11.80px;font-weight:400;color:#222;">3</div>
<div class="b" style="left:781.01px;top:271.70px;width:1.00px;height:618.30px;background:#e6e7f0"></div>
<div class="t" style="left:781.51px;transform:translateX(-50%);top:893.04px;font-size:11.80px;line-height:11.80px;font-weight:400;color:#222;">6</div>
<div class="b" style="left:965.99px;top:271.70px;width:1.00px;height:618.30px;background:#e6e7f0"></div>
<div class="t" style="left:966.49px;transform:translateX(-50%);top:893.04px;font-size:11.80px;line-height:11.80px;font-weight:400;color:#222;">9</div>
<div class="b" style="left:1150.97px;top:271.70px;width:1.00px;height:618.30px;background:#e6e7f0"></div>
<div class="t" style="left:1151.47px;transform:translateX(-50%);top:893.04px;font-size:11.80px;line-height:11.80px;font-weight:400;color:#222;">12</div>
<div class="b" style="left:1335.95px;top:271.70px;width:1.00px;height:618.30px;background:#e6e7f0"></div>
<div class="t" style="left:1336.45px;transform:translateX(-50%);top:893.04px;font-size:11.80px;line-height:11.80px;font-weight:400;color:#222;">15</div>
<div class="b" style="left:411.55px;top:884.80px;width:924.90px;height:1.20px;background:#e6e7f0"></div>
<div class="b" style="left:411.55px;top:272.85px;width:246.64px;height:30.50px;background:#5b6fbf"></div>
<div class="b" style="left:658.19px;top:272.85px;width:61.66px;height:30.50px;background:#9dc87d"></div>
<div class="b" style="left:411.55px;top:317.51px;width:369.96px;height:30.50px;background:#5b6fbf"></div>
<div class="b" style="left:781.51px;top:317.51px;width:61.66px;height:30.50px;background:#9dc87d"></div>
<div class="b" style="left:411.55px;top:362.17px;width:184.98px;height:30.50px;background:#5b6fbf"></div>
<div class="b" style="left:411.55px;top:406.83px;width:493.28px;height:30.50px;background:#5b6fbf"></div>
<div class="b" style="left:904.83px;top:406.83px;width:123.32px;height:30.50px;background:#9dc87d"></div>
<div class="b" style="left:411.55px;top:451.49px;width:246.64px;height:30.50px;background:#5b6fbf"></div>
<div class="b" style="left:658.19px;top:451.49px;width:61.66px;height:30.50px;background:#9dc87d"></div>
<div class="b" style="left:411.55px;top:496.15px;width:308.30px;height:30.50px;background:#5b6fbf"></div>
<div class="b" style="left:719.85px;top:496.15px;width:123.32px;height:30.50px;background:#9dc87d"></div>
<div class="b" style="left:411.55px;top:540.81px;width:308.30px;height:30.50px;background:#5b6fbf"></div>
<div class="b" style="left:719.85px;top:540.81px;width:61.66px;height:30.50px;background:#9dc87d"></div>
<div class="b" style="left:411.55px;top:585.47px;width:616.60px;height:30.50px;background:#5b6fbf"></div>
<div class="b" style="left:1028.15px;top:585.47px;width:184.98px;height:30.50px;background:#9dc87d"></div>
<div class="b" style="left:411.55px;top:630.13px;width:308.30px;height:30.50px;background:#5b6fbf"></div>
<div class="b" style="left:411.55px;top:674.79px;width:493.28px;height:30.50px;background:#5b6fbf"></div>
<div class="b" style="left:904.83px;top:674.79px;width:123.32px;height:30.50px;background:#9dc87d"></div>
<div class="b" style="left:411.55px;top:719.45px;width:246.64px;height:30.50px;background:#5b6fbf"></div>
<div class="b" style="left:658.19px;top:719.45px;width:123.32px;height:30.50px;background:#9dc87d"></div>
<div class="b" style="left:411.55px;top:764.11px;width:246.64px;height:30.50px;background:#5b6fbf"></div>
<div class="b" style="left:658.19px;top:764.11px;width:61.66px;height:30.50px;background:#9dc87d"></div>
<div class="b" style="left:411.55px;top:808.77px;width:184.98px;height:30.50px;background:#5b6fbf"></div>
<div class="b" style="left:596.53px;top:808.77px;width:61.66px;height:30.50px;background:#9dc87d"></div>
<div class="b" style="left:411.55px;top:853.43px;width:61.66px;height:30.50px;background:#5b6fbf"></div>
<div class="b" style="left:406.50px;top:332.26px;width:5.00px;height:1.00px;background:#e6e7f0"></div>
<div class="t" style="right:1272.70px;top:327.50px;font-size:11.80px;line-height:11.80px;font-weight:400;color:#222;">02:12</div>
<div class="b" style="left:406.50px;top:421.58px;width:5.00px;height:1.00px;background:#e6e7f0"></div>
<div class="t" style="right:1272.70px;top:416.82px;font-size:11.80px;line-height:11.80px;font-weight:400;color:#222;">02:10</div>
<div class="b" style="left:406.50px;top:510.90px;width:5.00px;height:1.00px;background:#e6e7f0"></div>
<div class="t" style="right:1272.70px;top:506.14px;font-size:11.80px;line-height:11.80px;font-weight:400;color:#222;">02:08</div>
<div class="b" style="left:406.50px;top:600.22px;width:5.00px;height:1.00px;background:#e6e7f0"></div>
<div class="t" style="right:1272.70px;top:595.46px;font-size:11.80px;line-height:11.80px;font-weight:400;color:#222;">02:06</div>
<div class="b" style="left:406.50px;top:689.54px;width:5.00px;height:1.00px;background:#e6e7f0"></div>
<div class="t" style="right:1272.70px;top:684.78px;font-size:11.80px;line-height:11.80px;font-weight:400;color:#222;">02:04</div>
<div class="b" style="left:406.50px;top:778.86px;width:5.00px;height:1.00px;background:#e6e7f0"></div>
<div class="t" style="right:1272.70px;top:774.10px;font-size:11.80px;line-height:11.80px;font-weight:400;color:#222;">02:02</div>
<div class="b" style="left:406.50px;top:868.18px;width:5.00px;height:1.00px;background:#e6e7f0"></div>
<div class="t" style="right:1272.70px;top:863.42px;font-size:11.80px;line-height:11.80px;font-weight:700;color:#222;">02:00</div>
<div class="b" style="left:777.30px;top:930.35px;width:24.70px;height:14.00px;background:#5b6fbf;border-radius:4px"></div>
<div class="t" style="left:807.40px;top:930.64px;font-size:11.84px;line-height:11.84px;font-weight:400;color:#2e2e2e;">/api/cart</div>
<div class="b" style="left:858.15px;top:930.35px;width:24.50px;height:14.00px;background:#9dc87d;border-radius:4px"></div>
<div class="t" style="left:887.75px;top:930.14px;font-size:11.99px;line-height:11.99px;font-weight:400;color:#2e2e2e;">/api/checkout</div>
<div class="t" style="left:1391.40px;top:162.34px;font-size:14.35px;line-height:14.35px;font-weight:700;color:#1a2230;">Settings</div>
<svg class="b" style="left:1650.00px;top:162.50px;" width="18.00" height="12.00" viewBox="0 0 18 12" fill="none"><g stroke="#1d2736" stroke-width="1.05" fill="none"><path d="M1.5 2 H9.3 M1.5 6 H15.3 M1.5 9.9 H9.3"/><path d="M11.6 2.2 L15.3 6 L11.6 9.8"/></g></svg>
<div class="b" style="left:1391.00px;top:185.00px;width:279.50px;height:1.00px;background:#d3d6dc"></div>
<div class="t" style="left:1395.20px;top:201.79px;font-size:12.10px;line-height:12.10px;font-weight:700;color:#1a2230;">Visualization type</div>
<div class="b" style="left:1395.20px;top:220.60px;width:270.90px;height:30.80px;background:#fdfdfe;border:1px solid #e1e3ea;border-radius:3px"></div>
<div class="t" style="left:1427.65px;top:228.89px;font-size:14.10px;line-height:14.10px;font-weight:400;color:#283444;-webkit-text-stroke:0.18px currentColor;letter-spacing:0.00px">Bar</div>
<svg class="b" style="left:1646.20px;top:231.60px;" width="12.80" height="8.80" viewBox="1646.20 231.60 12.80 8.80" fill="none"><path d="M1648.70 234.10 L1652.60 237.90 L1656.50 234.10" stroke="#283444" stroke-width="1.0" stroke-linecap="round" stroke-linejoin="round"/></svg>
<svg class="b" style="left:1400.00px;top:226.00px;" width="20.00" height="20.00" viewBox="1400.00 226.00 20.00 20.00" fill="none"><g stroke="#1d2736" stroke-width="0.95" fill="none" stroke-linejoin="miter"><path d="M1403 243.45 H1418"/><path d="M1404.45 241.6 V230.4 H1408.45 V241.6 M1408.45 235.5 H1412.5 M1412.5 241.6 V232.5 H1416.5 V241.6"/></g></svg>
<svg class="b" style="left:1394.80px;top:265.00px;" width="16.40" height="10.60" viewBox="1394.80 265.00 16.40 10.60" fill="none"><path d="M1397.33 267.52 L1403.00 273.08 L1408.67 267.52" stroke="#283444" stroke-width="1.05" stroke-linecap="round" stroke-linejoin="round"/></svg>
<div class="t" style="left:1419.50px;top:263.74px;font-size:14.07px;line-height:14.07px;font-weight:700;color:#1a2230;">Fields</div>
<div class="b" style="left:1392.20px;top:286.60px;width:34.00px;height:21.50px;background:#b7ccea;border-radius:11px"></div>
<div class="b" style="left:1395.20px;top:289.60px;width:28.00px;height:15.50px;background:#2d62b5;border-radius:8px"></div>
<div class="b" style="left:1408.60px;top:290.70px;width:13.40px;height:13.40px;background:#fff;border-radius:50%"></div>
<div class="t" style="left:1431.20px;top:290.84px;font-size:14.50px;line-height:14.50px;font-weight:400;color:#283444;-webkit-text-stroke:0.18px currentColor;">Switch axes</div>
<div class="t" style="left:1395.20px;top:324.79px;font-size:12.10px;line-height:12.10px;font-weight:700;color:#1a2230;">Y-Axis</div>
<div class="b" style="left:1395.20px;top:343.70px;width:270.90px;height:31.30px;background:#fdfdfe;border:1px solid #e1e3ea;border-radius:3px"></div>
<div class="t" style="left:1403.00px;top:351.29px;font-size:14.10px;line-height:14.10px;font-weight:400;color:#283444;-webkit-text-stroke:0.18px currentColor;letter-spacing:0.00px">span(time,1m)</div>
<svg class="b" style="left:1624.65px;top:353.35px;" width="12.00" height="12.00" viewBox="0 0 12 12" fill="none"><circle cx="6" cy="6" r="6" fill="#a9adb4"/><path d="M3.8 3.8 L8.2 8.2 M8.2 3.8 L3.8 8.2" stroke="#fff" stroke-width="1.4"/></svg>
<svg class="b" style="left:1644.40px;top:354.95px;" width="12.00" height="8.80" viewBox="1644.40 354.95 12.00 8.80" fill="none"><path d="M1646.90 357.45 L1650.40 361.25 L1653.90 357.45" stroke="#283444" stroke-width="1.0" stroke-linecap="round" stroke-linejoin="round"/></svg>
<div class="t" style="left:1395.20px;top:383.09px;font-size:12.10px;line-height:12.10px;font-weight:700;color:#1a2230;">X-Axis</div>
<div class="b" style="left:1395.20px;top:401.80px;width:270.90px;height:30.90px;background:#fdfdfe;border:1px solid #e1e3ea;border-radius:3px"></div>
<div class="t" style="left:1403.00px;top:409.19px;font-size:14.10px;line-height:14.10px;font-weight:400;color:#283444;-webkit-text-stroke:0.18px currentColor;letter-spacing:0.00px">count()</div>
<svg class="b" style="left:1624.65px;top:411.25px;" width="12.00" height="12.00" viewBox="0 0 12 12" fill="none"><circle cx="6" cy="6" r="6" fill="#a9adb4"/><path d="M3.8 3.8 L8.2 8.2 M8.2 3.8 L3.8 8.2" stroke="#fff" stroke-width="1.4"/></svg>
<svg class="b" style="left:1644.40px;top:412.85px;" width="12.00" height="8.80" viewBox="1644.40 412.85 12.00 8.80" fill="none"><path d="M1646.90 415.35 L1650.40 419.15 L1653.90 415.35" stroke="#283444" stroke-width="1.0" stroke-linecap="round" stroke-linejoin="round"/></svg>
<div class="t" style="left:1395.20px;top:440.64px;font-size:12.10px;line-height:12.10px;font-weight:700;color:#1a2230;">Color</div>
<div class="b" style="left:1395.20px;top:460.00px;width:270.90px;height:30.90px;background:#fdfdfe;border:1px solid #e1e3ea;border-radius:3px"></div>
<div class="t" style="left:1403.00px;top:467.39px;font-size:14.10px;line-height:14.10px;font-weight:400;color:#283444;-webkit-text-stroke:0.18px currentColor;letter-spacing:0.45px">attributes.url.path</div>
<svg class="b" style="left:1624.65px;top:469.45px;" width="12.00" height="12.00" viewBox="0 0 12 12" fill="none"><circle cx="6" cy="6" r="6" fill="#a9adb4"/><path d="M3.8 3.8 L8.2 8.2 M8.2 3.8 L3.8 8.2" stroke="#fff" stroke-width="1.4"/></svg>
<svg class="b" style="left:1644.40px;top:471.05px;" width="12.00" height="8.80" viewBox="1644.40 471.05 12.00 8.80" fill="none"><path d="M1646.90 473.55 L1650.40 477.35 L1653.90 473.55" stroke="#283444" stroke-width="1.0" stroke-linecap="round" stroke-linejoin="round"/></svg>
<div class="b" style="left:1391.00px;top:503.00px;width:279.50px;height:1.00px;background:#d3d6dc"></div>
<svg class="b" style="left:1394.80px;top:517.20px;" width="16.40" height="10.60" viewBox="1394.80 517.20 16.40 10.60" fill="none"><path d="M1397.33 519.73 L1403.00 525.27 L1408.67 519.73" stroke="#283444" stroke-width="1.05" stroke-linecap="round" stroke-linejoin="round"/></svg>
<div class="t" style="left:1419.50px;top:515.94px;font-size:14.07px;line-height:14.07px;font-weight:700;color:#1a2230;">Bar</div>
<div class="t" style="left:1395.20px;top:544.24px;font-size:12.10px;line-height:12.10px;font-weight:700;color:#1a2230;">Size</div>
<div class="b" style="left:1395.35px;top:563.20px;width:271.00px;height:31.25px;background:#f3f4f6;border:1px solid #dfe2e8;border-radius:3px"></div>
<div class="b" style="left:1398.20px;top:566.00px;width:130.75px;height:25.80px;background:#5e6775;border-radius:3px"></div>
<div class="t" style="left:1463.60px;transform:translateX(-50%);top:571.74px;font-size:14.12px;line-height:14.12px;font-weight:700;color:#fff;">Auto</div>
<div class="t" style="left:1597.30px;transform:translateX(-50%);top:572.24px;font-size:14.06px;line-height:14.06px;font-weight:400;color:#283444;-webkit-text-stroke:0.18px currentColor;">Manual</div>
<div class="b" style="left:1395.35px;top:611.45px;width:27.40px;height:16.00px;background:#eceef1;border-radius:8px"></div>
<div class="b" style="left:1396.10px;top:612.60px;width:13.70px;height:13.70px;background:#fdfdfe;border:1px solid #b9bcc2;border-radius:50%;box-shadow:0 1px 2px rgba(0,0,0,.10)"></div>
<div class="t" style="left:1431.00px;top:612.39px;font-size:14.49px;line-height:14.49px;font-weight:400;color:#283444;-webkit-text-stroke:0.18px currentColor;">Use threshold colors</div>
<div class="b" style="left:1395.35px;top:635.50px;width:27.40px;height:16.00px;background:#eceef1;border-radius:8px"></div>
<div class="b" style="left:1396.10px;top:636.65px;width:13.70px;height:13.70px;background:#fdfdfe;border:1px solid #b9bcc2;border-radius:50%;box-shadow:0 1px 2px rgba(0,0,0,.10)"></div>
<div class="t" style="left:1431.00px;top:636.34px;font-size:14.33px;line-height:14.33px;font-weight:400;color:#283444;-webkit-text-stroke:0.18px currentColor;">Show border</div>
<div class="b" style="left:1391.00px;top:660.00px;width:279.50px;height:1.00px;background:#d3d6dc"></div>
<svg class="b" style="left:1394.80px;top:674.00px;" width="16.40" height="10.60" viewBox="1394.80 674.00 16.40 10.60" fill="none"><path d="M1397.33 676.52 L1403.00 682.07 L1408.67 676.52" stroke="#283444" stroke-width="1.05" stroke-linecap="round" stroke-linejoin="round"/></svg>
<div class="t" style="left:1419.50px;top:672.74px;font-size:14.07px;line-height:14.07px;font-weight:700;color:#1a2230;">Bucket</div>
<div class="t" style="left:1395.20px;top:701.69px;font-size:12.10px;line-height:12.10px;font-weight:700;color:#1a2230;">Type</div>
<div class="b" style="left:1395.20px;top:720.40px;width:270.90px;height:30.90px;background:#fdfdfe;border:1px solid #e1e3ea;border-radius:3px"></div>
<div class="t" style="left:1403.00px;top:728.74px;font-size:14.10px;line-height:14.10px;font-weight:400;color:#283444;-webkit-text-stroke:0.18px currentColor;letter-spacing:0.00px">Sum</div>
<svg class="b" style="left:1646.20px;top:731.45px;" width="12.80" height="8.80" viewBox="1646.20 731.45 12.80 8.80" fill="none"><path d="M1648.70 733.95 L1652.60 737.75 L1656.50 733.95" stroke="#283444" stroke-width="1.0" stroke-linecap="round" stroke-linejoin="round"/></svg>
<div class="t" style="left:1395.20px;top:771.44px;font-size:12.10px;line-height:12.10px;font-weight:700;color:#1a2230;">Interval</div>
<div class="b" style="left:1395.20px;top:790.35px;width:270.90px;height:30.90px;background:#fdfdfe;border:1px solid #e1e3ea;border-radius:3px"></div>
<div class="t" style="left:1403.00px;top:798.69px;font-size:14.10px;line-height:14.10px;font-weight:400;color:#283444;-webkit-text-stroke:0.18px currentColor;letter-spacing:0.00px">Auto</div>
<svg class="b" style="left:1646.20px;top:801.40px;" width="12.80" height="8.80" viewBox="1646.20 801.40 12.80 8.80" fill="none"><path d="M1648.70 803.90 L1652.60 807.70 L1656.50 803.90" stroke="#283444" stroke-width="1.0" stroke-linecap="round" stroke-linejoin="round"/></svg>
<div class="b" style="left:1391.00px;top:830.00px;width:279.50px;height:1.00px;background:#d3d6dc"></div>
<svg class="b" style="left:1397.80px;top:842.30px;" width="10.30" height="15.10" viewBox="1397.80 842.30 10.30 15.10" fill="none"><path d="M1400.33 844.82 L1405.57 849.85 L1400.33 854.88" stroke="#283444" stroke-width="1.05" stroke-linecap="round" stroke-linejoin="round"/></svg>
<div class="t" style="left:1419.50px;top:842.84px;font-size:14.07px;line-height:14.07px;font-weight:700;color:#1a2230;">Thresholds</div>
<div class="b" style="left:1391.00px;top:868.00px;width:279.50px;height:1.00px;background:#d3d6dc"></div>
<svg class="b" style="left:1397.80px;top:880.40px;" width="10.30" height="15.10" viewBox="1397.80 880.40 10.30 15.10" fill="none"><path d="M1400.33 882.92 L1405.57 887.95 L1400.33 892.98" stroke="#283444" stroke-width="1.05" stroke-linecap="round" stroke-linejoin="round"/></svg>
<div class="t" style="left:1419.50px;top:880.94px;font-size:14.07px;line-height:14.07px;font-weight:700;color:#1a2230;">Axes</div>
<div class="b" style="left:1391.00px;top:906.00px;width:279.50px;height:1.00px;background:#d3d6dc"></div>
<svg class="b" style="left:1397.80px;top:918.20px;" width="10.30" height="15.10" viewBox="1397.80 918.20 10.30 15.10" fill="none"><path d="M1400.33 920.72 L1405.57 925.75 L1400.33 930.77" stroke="#283444" stroke-width="1.05" stroke-linecap="round" stroke-linejoin="round"/></svg>
<div class="t" style="left:1419.50px;top:918.74px;font-size:14.07px;line-height:14.07px;font-weight:700;color:#1a2230;">Legend</div>
<div class="b" style="left:1391.00px;top:944.40px;width:279.50px;height:1.00px;background:#d3d6dc"></div>
<svg class="b" style="left:1397.80px;top:956.80px;" width="10.30" height="15.00" viewBox="1397.80 956.80 10.30 15.00" fill="none"><path d="M1400.33 959.32 L1405.57 964.30 L1400.33 969.27" stroke="#283444" stroke-width="1.05" stroke-linecap="round" stroke-linejoin="round"/></svg>
<div class="b" style="left:330.00px;top:968.00px;width:960.00px;height:30.00px;border-radius:15px;background:#ccc;box-shadow:0 0 46px 10px rgba(30,40,60,0.20)"></div>
</div></body></html>
